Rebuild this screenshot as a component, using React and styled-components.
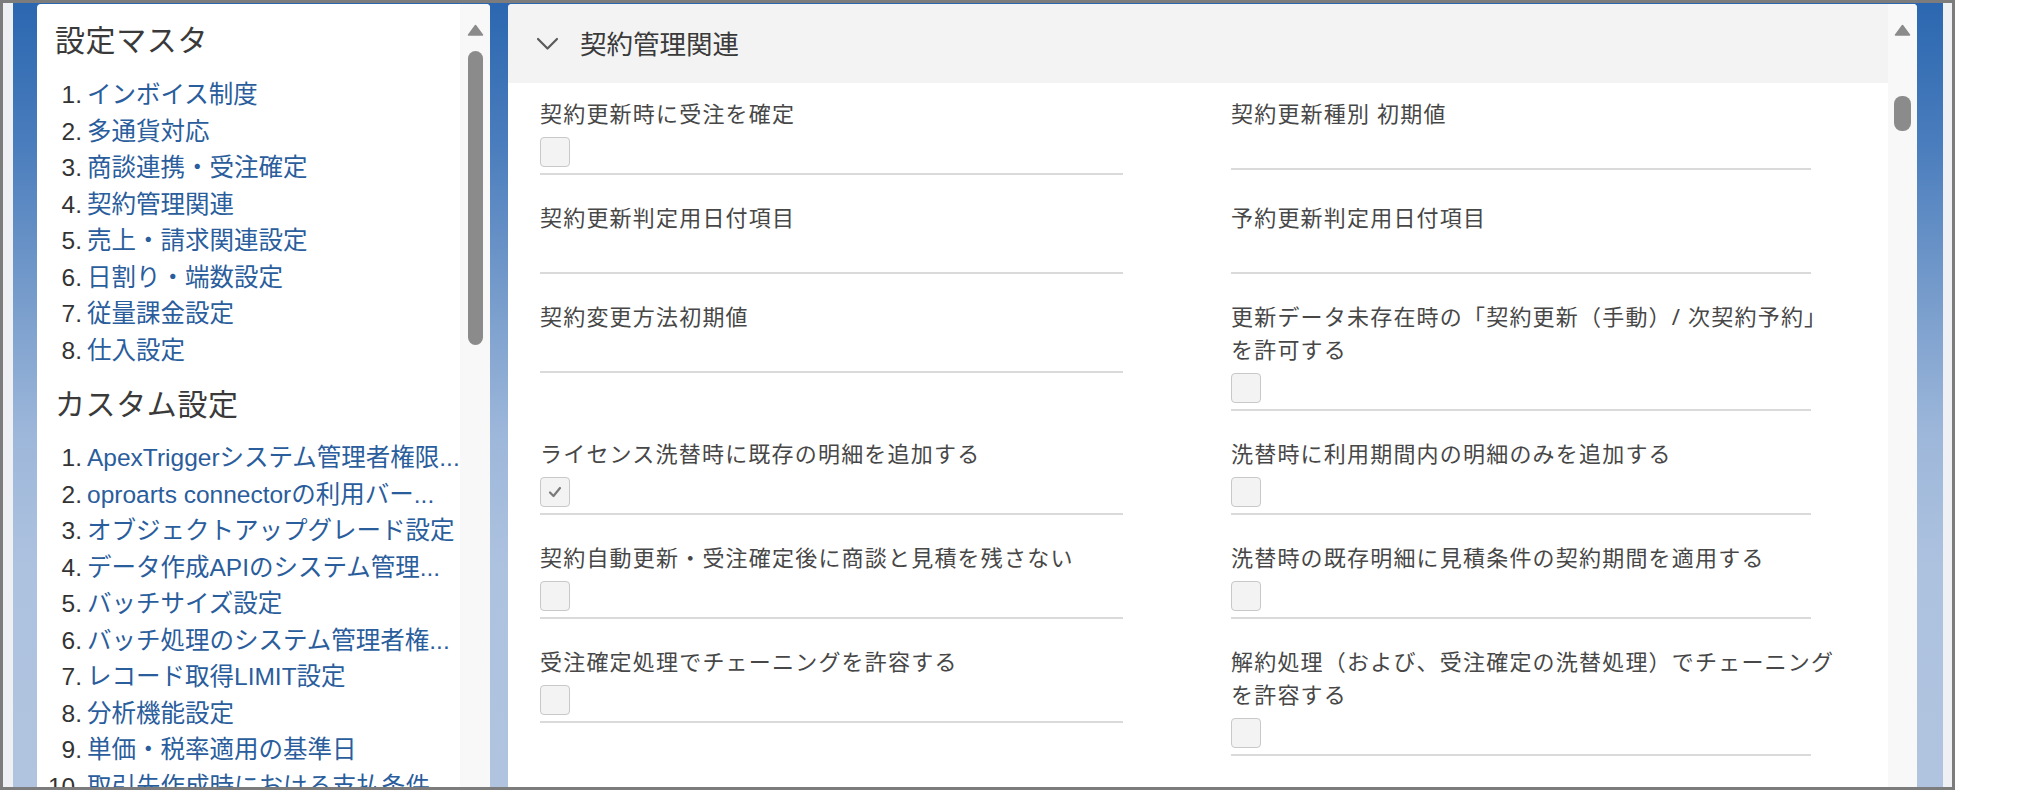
import React from 'react';
import styled, { createGlobalStyle } from 'styled-components';

const GlobalStyle = createGlobalStyle`
  html, body { margin: 0; padding: 0; background: #ffffff; }
  body { font-family: "Noto Sans", "Noto Sans CJK JP", sans-serif; }
  * { box-sizing: border-box; }
`;

const masterItems = [
    'インボイス制度',
    '多通貨対応',
    '商談連携・受注確定',
    '契約管理関連',
    '売上・請求関連設定',
    '日割り・端数設定',
    '従量課金設定',
    '仕入設定',
];

// names are shown as the menu shows them, already shortened
const customItems = [
    'ApexTriggerシステム管理者権限...',
    'oproarts connectorの利用バー...',
    'オブジェクトアップグレード設定',
    'データ作成APIのシステム管理...',
    'バッチサイズ設定',
    'バッチ処理のシステム管理者権...',
    'レコード取得LIMIT設定',
    '分析機能設定',
    '単価・税率適用の基準日',
    '取引先作成時における支払条件',
];

// each row of the form: [left field, right field]
const fields = [
    [{ label: '契約更新時に受注を確定', type: 'checkbox' }, { label: '契約更新種別 初期値' }],
    [{ label: '契約更新判定用日付項目' }, { label: '予約更新判定用日付項目' }],
    [
        { label: '契約変更方法初期値' },
        { label: '更新データ未存在時の「契約更新（手動）/ 次契約予約」\nを許可する', type: 'checkbox' },
    ],
    [
        { label: 'ライセンス洗替時に既存の明細を追加する', type: 'checkbox', checked: true },
        { label: '洗替時に利用期間内の明細のみを追加する', type: 'checkbox' },
    ],
    [
        { label: '契約自動更新・受注確定後に商談と見積を残さない', type: 'checkbox' },
        { label: '洗替時の既存明細に見積条件の契約期間を適用する', type: 'checkbox' },
    ],
    [
        { label: '受注確定処理でチェーニングを許容する', type: 'checkbox' },
        { label: '解約処理（および、受注確定の洗替処理）でチェーニング\nを許容する', type: 'checkbox' },
    ],
];

const Frame = styled.div`
    width: 1955px;
    height: 790px;
    border: 3px solid #7c7c7c;
    background: #eef0f3;
    padding: 0 9px 0 10px;
    display: flex;
`;

const Wallpaper = styled.div`
    flex: 1;
    display: flex;
    gap: 18px;
    padding: 1px 26px 0 24px;
    overflow: hidden;
    background: linear-gradient(180deg, #2b67b0 0%, #4a7dbd 18%, #789dcc 38%, #9db7da 55%, #adc2df 72%, #b0c4df 100%);
`;

const LeftPanel = styled.aside`
    width: 453px;
    background: #ffffff;
    border-radius: 4px 4px 0 0;
    display: flex;
    overflow: hidden;
`;

const LeftContent = styled.nav`
    flex: 1;
    min-width: 0;
    padding-top: 16px;
`;

const SectionTitle = styled.h2`
    margin: 0;
    padding-left: 18px;
    font-size: 30px;
    letter-spacing: 0.6px;
    font-weight: 400;
    line-height: 40px;
    color: #3a3a3a;
`;

const NavList = styled.ol`
    list-style: none;
    margin: ${p => p.$top}px 0 ${p => p.$bottom || 0}px;
    padding: 0 0 0 8px;
    font-family: "Liberation Sans", "Noto Sans CJK JP", sans-serif;
`;

const NavItem = styled.li`
    display: flex;
    height: 36.5px;
    align-items: center;
    font-size: 24.5px;
    line-height: 36.5px;
`;

const NavNum = styled.span`
    flex: none;
    width: 37px;
    margin-right: 5px;
    text-align: right;
    color: #333333;
`;

const NavLink = styled.a`
    flex: 1;
    min-width: 0;
    white-space: nowrap;
    color: #2a5d9c;
    text-decoration: none;
`;

const ScrollColumn = styled.div`
    flex: none;
    width: ${p => p.$width}px;
    background: #f8f8f8;
    display: flex;
    flex-direction: column;
    align-items: center;
    padding-top: 20px;
`;

const ScrollThumb = styled.div`
    width: ${p => p.$width}px;
    height: ${p => p.$height}px;
    margin-top: ${p => p.$offset}px;
    border-radius: 8px;
    background: #8b8b8b;
`;

const RightPanel = styled.section`
    flex: 1;
    background: #ffffff;
    border-radius: 4px 4px 0 0;
    display: flex;
    overflow: hidden;
`;

const RightMain = styled.div`
    flex: 1;
    display: flex;
    flex-direction: column;
`;

const SectionHeader = styled.header`
    height: 79px;
    background: #f3f3f3;
    display: flex;
    align-items: center;
    gap: 21px;
    padding-left: 28px;
`;

const HeaderTitle = styled.h3`
    margin: 0;
    font-size: 26.5px;
    font-weight: 400;
    line-height: 36px;
    color: #3a3a3a;
`;

const FormGrid = styled.div`
    display: grid;
    grid-template-columns: 583px 580px;
    column-gap: 108px;
    row-gap: 26px;
    align-items: start;
    padding: 13.5px 0 0 32px;
`;

const Field = styled.div`
    border-bottom: 2px solid #dadada;
`;

const FieldLabel = styled.div`
    font-size: 22px;
    letter-spacing: 1.2px;
    line-height: 33px;
    color: #474747;
    white-space: pre;
`;

const FieldValue = styled.div`
    min-height: 38px;
    display: flex;
    align-items: flex-start;
`;

const CheckBox = styled.span`
    width: 30px;
    height: 30px;
    margin: 7px 0 6px;
    border: 1.5px solid #c8c8c8;
    border-radius: 4px;
    background: #f3f3f3;
    display: flex;
    align-items: center;
    justify-content: center;
`;

function UpArrow() {
    return (
        <svg width="17" height="12" viewBox="0 0 17 12">
            <path d="M8.5 1.5 L15.5 11 L1.5 11 Z" fill="#8b8b8b" stroke="#8b8b8b" strokeWidth="1.5" strokeLinejoin="round" />
        </svg>
    );
}

function Chevron() {
    return (
        <svg width="23" height="15" viewBox="0 0 23 15">
            <path d="M2 3 L11.5 12.5 L21 3" fill="none" stroke="#5a5a5a" strokeWidth="2.2" strokeLinecap="round" strokeLinejoin="round" />
        </svg>
    );
}

function CheckMark() {
    return (
        <svg width="16" height="14" viewBox="0 0 16 14">
            <path d="M3 7.5 L6.5 11 L13 3" fill="none" stroke="#7a7a7a" strokeWidth="2.2" strokeLinecap="round" strokeLinejoin="round" />
        </svg>
    );
}

function NavSection({ items, top, bottom }) {
    return (
        <NavList $top={top} $bottom={bottom}>
            {items.map((item, index) => (
                <NavItem key={item}>
                    <NavNum>{index + 1}.</NavNum>
                    <NavLink href="#">{item}</NavLink>
                </NavItem>
            ))}
        </NavList>
    );
}

function FormField({ label, type, checked }) {
    return (
        <Field>
            <FieldLabel>{label}</FieldLabel>
            <FieldValue>
                {type === 'checkbox' ? <CheckBox>{checked ? <CheckMark /> : null}</CheckBox> : null}
            </FieldValue>
        </Field>
    );
}

export default function App() {
    return (
        <>
            <GlobalStyle />
            <Frame>
                <Wallpaper>
                    <LeftPanel>
                        <LeftContent>
                            <SectionTitle>設定マスタ</SectionTitle>
                            <NavSection items={masterItems} top={17} bottom={15} />
                            <SectionTitle>カスタム設定</SectionTitle>
                            <NavSection items={customItems} top={16} />
                        </LeftContent>
                        <ScrollColumn $width={30}>
                            <UpArrow />
                            <ScrollThumb $width={15} $height={294} $offset={15} />
                        </ScrollColumn>
                    </LeftPanel>
                    <RightPanel>
                        <RightMain>
                            <SectionHeader>
                                <Chevron />
                                <HeaderTitle>契約管理関連</HeaderTitle>
                            </SectionHeader>
                            <FormGrid>
                                {fields.flat().map((field, i) => (
                                    <FormField key={i} {...field} />
                                ))}
                            </FormGrid>
                        </RightMain>
                        <ScrollColumn $width={29}>
                            <UpArrow />
                            <ScrollThumb $width={17} $height={35} $offset={60} />
                        </ScrollColumn>
                    </RightPanel>
                </Wallpaper>
            </Frame>
        </>
    );
}
